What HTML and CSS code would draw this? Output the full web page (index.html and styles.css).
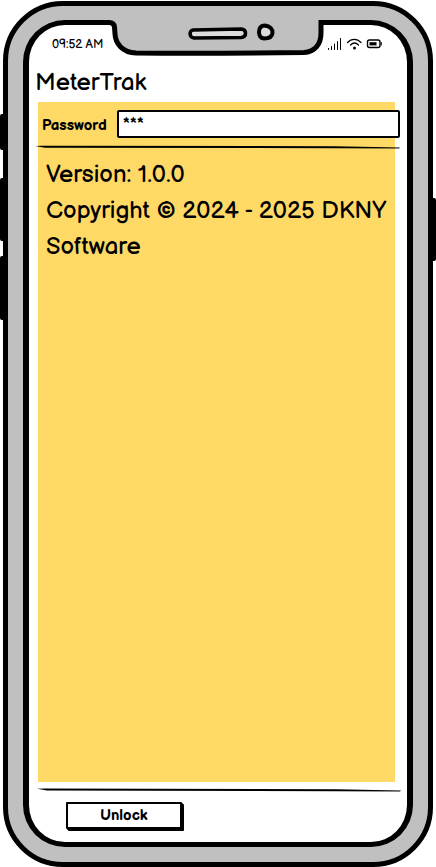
FILE: index.html
```html
<!DOCTYPE html>
<html lang="en">
<head>
<meta charset="utf-8">
<meta name="viewport" content="width=device-width, initial-scale=1">
<title>MeterTrak</title>
<link rel="stylesheet" href="styles.css">
</head>
<body>
<div class="phone">
  <span class="side-key side-key-mute"></span>
  <span class="side-key side-key-up"></span>
  <span class="side-key side-key-down"></span>
  <span class="side-key side-key-power"></span>
  <svg class="notch" viewBox="106 19 222 38" aria-hidden="true">
    <path d="M106 19H328V20H321V33C321 44 315 52 304 52.500Q216 53.500 136 53C122 52.500 115.500 43 115 34L114.500 27Q114 22.500 109 22.500H106Z" fill="#c0c0c0"/>
    <path d="M106 22.500H109Q114 22.500 114.500 27L115 34C115.500 43 122 52.500 136 53Q216 53.500 304 52.500C315 52 321 44 321 33V22.500H328" fill="none" stroke="#000" stroke-width="5"/>
    <path d="M193 30L241 29C247 29.500 247 37 241 37.500L194 38C189 37.500 189 30.500 193 30Z" fill="#dcdcdc" stroke="#000" stroke-width="3.600"/>
    <path d="M265 25.500C270 26 273 29.500 272.500 33C272 38 268 38.500 264 38.500C260 38 259 35 259 32C259 28 261 25.500 265 25.500Z" fill="#dcdcdc" stroke="#000" stroke-width="4"/>
  </svg>
  <div class="screen">
    <header class="status">
      <time class="clock">09:52 AM</time>
      <svg class="status-icons" viewBox="0 0 56 14" aria-hidden="true">
        <g stroke="#000" stroke-linecap="round" fill="none">
          <path d="M1.500 11.500V10.500M4.500 11.500V8.500M7.500 11.500V6M10.500 11.500V3.500M13.500 11.500V0.500"/>
          <path d="M20.500 4.500C24.500 0.300 30 0.300 34 4.500M23.500 7C26 4.500 29 4.500 31.500 7" stroke-width="1.200"/>
          <rect x="40.500" y="2" width="12.500" height="7.500" rx="2" stroke-width="1.400"/>
          <path d="M54.300 4.500V7"/>
        </g>
        <circle cx="27.500" cy="10" r="1.500"/>
        <rect x="42.500" y="4.200" width="7" height="3.200"/>
      </svg>
    </header>
    <h1 class="title">MeterTrak</h1>
    <main class="panel">
      <form class="login" id="unlock-form">
        <label class="login-label" for="password">Password</label>
        <input class="login-input" id="password" type="text" value="***" autocomplete="off">
      </form>
      <svg class="rule rule-top" viewBox="0 0 365 4" preserveAspectRatio="none" aria-hidden="true"><path d="M0 0L8 -0.300L300 0.200L365 1.500L364 2.500L300 2.200L10 1.700Z"/></svg>
      <div class="about">
        <p>Version: 1.0.0</p>
        <p>Copyright © 2024 - 2025 DKNY Software</p>
      </div>
    </main>
    <footer class="actions">
      <svg class="rule" viewBox="0 0 365 4" preserveAspectRatio="none" aria-hidden="true"><path d="M0 0.700L8 0.500L300 1.200L365 2.500L364 3.500L300 3.200L10 2.500Z"/></svg>
      <button class="unlock" type="submit" form="unlock-form">Unlock</button>
    </footer>
  </div>
</div>
</body>
</html>
```

FILE: styles.css
```css
* {
  box-sizing: border-box;
}

body {
  margin: 0;
  background: #fff;
  color: #000;
  font-family: "Balsamiq Sans", Lato, sans-serif;
}

/* Device body */
.phone {
  position: relative;
  display: flex;
  min-height: calc(100vh - 1px);
  margin: 1px 3px 0;
  padding: 14px 15px 15px;
  border: 5px solid #000;
  border-radius: 60px;
  background: #c0c0c0;
}

.side-key {
  position: absolute;
  left: -8px;
  width: 5px;
  border-radius: 2px 0 0 2px;
  background: #000;
}

.side-key-mute {
  top: 108px;
  height: 36px;
}

.side-key-up {
  top: 172px;
  height: 63px;
}

.side-key-down {
  top: 250px;
  height: 64px;
}

.side-key-power {
  top: 192px;
  right: -8px;
  left: auto;
  width: 7px;
  height: 63px;
  border-radius: 2px;
}

.notch {
  position: absolute;
  top: 13px;
  left: 50%;
  width: 222px;
  height: 38px;
  margin-left: -112px;
}

.screen {
  display: flex;
  flex: 1;
  flex-direction: column;
  min-width: 0;
  border: 5px solid #000;
  border-width: 5px 6px;
  border-radius: 42px;
  background: #fff;
}

/* Status bar */
.status {
  display: flex;
  align-items: center;
  justify-content: space-between;
  height: 40px;
  padding: 0 24px 0 23px;
}

.clock {
  font-size: 12px;
  line-height: 16px;
}

.status-icons {
  width: 56px;
  height: 14px;
}

.title {
  margin: 0 6px 2px;
  font-size: 24px;
  font-weight: 400;
  line-height: 35px;
}

/* Content panel */
.panel {
  flex: 1;
  margin: 0 12px 0 9px;
  background: #fed966;
}

.login {
  display: flex;
  align-items: center;
  gap: 10px;
  margin-right: -5px;
  padding: 8px 0 8px 4px;
}

.login-label {
  padding-top: 2px;
  font-size: 15px;
  font-weight: 700;
}

.login-input {
  flex: 1;
  min-width: 0;
  height: 28px;
  padding: 0 4px 2px;
  border: 2px solid #000;
  border-radius: 2px;
  background: #fff;
  color: #000;
  font: 400 15px "Balsamiq Sans", Lato, sans-serif;
}

.rule {
  display: block;
  width: 100%;
  height: 4px;
  overflow: visible;
}

.rule-top {
  width: calc(100% + 8px);
  margin-left: -3px;
}

.about {
  padding: 7px 8px;
  font-size: 24px;
  line-height: 36px;
}

.about p {
  margin: 0;
}

/* Bottom bar */
.actions {
  padding: 6px 6px 13px 8px;
}

.unlock {
  display: block;
  width: 116px;
  height: 27px;
  margin: 10px 0 0 29px;
  padding: 0;
  border: 2px solid #000;
  border-radius: 1px;
  background: #fff;
  box-shadow: 1px 1px 0 #000, 2px 2px 0 #000;
  color: #000;
  font: 700 15px "Balsamiq Sans", Lato, sans-serif;
}
```
